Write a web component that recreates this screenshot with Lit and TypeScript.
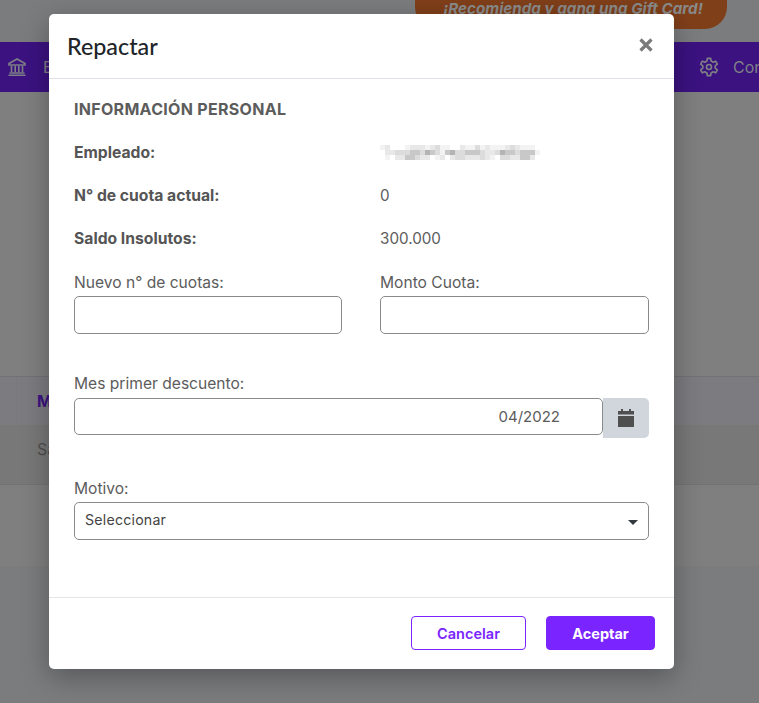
import { LitElement, html, css } from "lit";
import { customElement } from "lit/decorators.js";

const MOSAIC = [
  "12000122212311002113121112321110",
  "02233344354314533444322354434441",
  "01022443220120233222321033224420",
].join("");

function gearPath(): string {
  const pts: string[] = [];
  for (let k = 0; k < 6; k++) {
    const a = (30 + k * 60) * (Math.PI / 180);
    for (const [off, r] of [[-19, 7.6], [-11, 10.6], [11, 10.6], [19, 7.6]]) {
      const t = a + (off * Math.PI) / 180;
      pts.push(`${(12 + r * Math.cos(t)).toFixed(2)} ${(12 - r * Math.sin(t)).toFixed(2)}`);
    }
  }
  return "M" + pts.join("L") + "Z";
}

@customElement("app-root")
export class AppRoot extends LitElement {
  static styles = css`
    :host { display: block; position: relative; width: 759px; height: 703px; overflow: hidden; background: #7b7c7e; font-family: Inter, "Liberation Sans", sans-serif; color: #5c5c5c; }
    .page { display: flex; flex-direction: column; height: 100%; }
    .top { height: 42px; background: #7b7c7e; flex: none; display: flex; justify-content: flex-end; padding-right: 32px; }
    .promo { width: 312px; height: 29px; box-sizing: border-box; padding-left: 4px; border-radius: 0 0 22px 22px; background: #7f3f19; color: #8a8a8a; font-weight: 700; font-style: italic; font-size: 15.2px; text-align: center; line-height: 18px; }
    .nav { height: 50px; flex: none; background: #3b1280; color: #7f7f86; display: flex; justify-content: space-between; align-items: center; padding: 0 0 0 7px; font-size: 16px; }
    .nav span { display: flex; align-items: center; gap: 16px; }
    .nav svg { width: 20px; height: 20px; flex: none; }
    .nav em { font-style: normal; }
    .nav .right { width: 60px; gap: 14px; overflow: hidden; white-space: nowrap; }
    .content { height: 474px; flex: none; background: #7f7f7f; display: flex; flex-direction: column; padding-top: 284px; box-sizing: border-box; }
    .cell { background-image: linear-gradient(#797979, #797979); background-size: 1px 100%; background-position: 16px 0; background-repeat: no-repeat; padding-left: 37px; box-sizing: border-box; font-size: 16px; }
    .thead { height: 49px; flex: none; border-top: 1px solid #727272; background-color: #7c7b7f; color: #3b1280; font-weight: 700; padding-top: 14px; }
    .trow { height: 60px; flex: none; background-color: #787878; border-bottom: 1px solid #727272; padding-top: 14px; color: #4f4f4f; }
    .modal { position: absolute; left: 49px; top: 14px; width: 625px; height: 655px; background: #fff; border-radius: 5px; box-shadow: 0 8px 28px rgba(0,0,0,.3); display: flex; flex-direction: column; box-sizing: border-box; }
    .head { height: 65px; flex: none; border-bottom: 1px solid #dee2e6; display: flex; align-items: center; justify-content: space-between; padding: 0 21px 0 18px; box-sizing: border-box; }
    .head h2 { margin: 0; font: 500 23.3px Lato, sans-serif; color: #212529; }
    .close { width: 14px; height: 14px; display: block; margin-top: -3px; }
    .body { flex: 1; padding: 22px 25px 0; min-height: 0; }
    h3 { margin: 0 0 26px; font-size: 16px; line-height: 17px; font-weight: 700; color: #5c5c5c; letter-spacing: .3px; }
    .info { display: grid; grid-template-columns: 306px 1fr; row-gap: 26px; font-size: 15.2px; line-height: 17px; }
    .info b { font-weight: 700; font-size: 15.7px; color: #555; }
    .mosaic { display: grid; grid-template-columns: repeat(32, 5px); grid-auto-rows: 5px; width: 160px; margin-top: 1px; }
    .mosaic i { display: block; }
    label { display: block; font-size: 15.6px; line-height: 18px; color: #5c5c5c; }
    .two { display: grid; grid-template-columns: 268px 269px; column-gap: 38px; margin-top: 27px; }
    .box { height: 38px; border: 1px solid #8a8a8a; border-radius: 5px; box-sizing: border-box; margin-top: 4px; background: #fff; }
    .dategroup { display: flex; align-items: flex-start; margin-top: 5px; width: 575px; }
    .date { flex: 1; height: 37px; margin: 0; display: flex; align-items: center; justify-content: flex-end; padding-right: 42px; font-size: 15px; color: #5c5c5c; }
    .cal { width: 46px; height: 40px; background: #d1d5dc; border-radius: 0 5px 5px 0; display: flex; align-items: center; justify-content: center; }
    .cal svg { width: 16px; height: 18px; display: block; }
    .field-date { margin-top: 41px; }
    .field-sel { margin-top: 42px; width: 575px; }
    .select { margin-top: 4px; height: 38px; display: flex; align-items: center; justify-content: space-between; padding: 0 10px; font-size: 14.2px; color: #444; letter-spacing: .2px; }
    .select span { margin-bottom: 4px; }
    .caret { width: 0; height: 0; border-left: 5px solid transparent; border-right: 5px solid transparent; border-top: 5px solid #343a40; margin-top: 3px; }
    .foot { height: 72px; flex: none; border-top: 1px solid #e5e5e5; display: flex; justify-content: flex-end; align-items: flex-start; gap: 20px; padding: 18px 19px 0 0; box-sizing: border-box; }
    button { font: 700 14.5px Inter, sans-serif; height: 34px; border-radius: 4px; box-sizing: border-box; border: 1px solid #7a24ff; padding: 0; }
    .ghost { width: 115px; background: #fff; color: #7a24ff; font-weight: 600; }
    .solid { width: 109px; background: #7a24ff; color: #fff; }
  `;

  render() {
    const shades = ["#ffffff", "#f3f3f3", "#e8e8e8", "#dcdcdc", "#c8c8c8", "#b4b4b4"];
    return html`
      <div class="page">
        <div class="top"><div class="promo">¡Recomienda y gana una Gift Card!</div></div>
        <div class="nav">
          <span>
            <svg viewBox="0 0 20 20" fill="none" stroke="currentColor" stroke-width="1.6"><path d="M10 2 2 6.5v1.5h16V6.5z"/><path d="M4.5 9v6M8.2 9v6M11.8 9v6M15.5 9v6M2.5 16h15M1.5 18.2h17"/></svg>
            <em>B</em>
          </span>
          <span class="right">
            <svg viewBox="0 0 24 24" fill="none" stroke="currentColor" stroke-width="2" stroke-linejoin="round"><path d="${gearPath()}"/><circle cx="12" cy="12" r="3"/></svg>
            <em>Con</em>
          </span>
        </div>
        <div class="content">
          <div class="thead cell">M</div>
          <div class="trow cell">Sa</div>
        </div>
      </div>
      <div class="modal">
        <div class="head">
          <h2>Repactar</h2>
          <svg class="close" viewBox="0 0 14 14" stroke="#7b7b7b" stroke-width="3.2"><path d="M1.5 1.5l11 11M12.5 1.5l-11 11"/></svg>
        </div>
        <div class="body">
          <h3>INFORMACIÓN PERSONAL</h3>
          <div class="info">
            <b>Empleado:</b>
            <div class="mosaic">${[...MOSAIC].map((c) => html`<i style="background:${shades[+c]}"></i>`)}</div>
            <b>N° de cuota actual:</b><div>0</div>
            <b>Saldo Insolutos:</b><div>300.000</div>
          </div>
          <div class="two">
            <div><label>Nuevo n° de cuotas:</label><div class="box"></div></div>
            <div><label>Monto Cuota:</label><div class="box"></div></div>
          </div>
          <div class="field-date">
            <label>Mes primer descuento:</label>
            <div class="dategroup">
              <div class="box date">04/2022</div>
              <div class="cal"><svg viewBox="0 0 16 18"><path fill="#4f4f4f" d="M3 0h2v2h6V0h2v2h3v3.5H0V2h3zM0 7h16v11H0z"/></svg></div>
            </div>
          </div>
          <div class="field-sel">
            <label>Motivo:</label>
            <div class="box select"><span>Seleccionar</span><i class="caret"></i></div>
          </div>
        </div>
        <div class="foot">
          <button class="ghost">Cancelar</button>
          <button class="solid">Aceptar</button>
        </div>
      </div>
    `;
  }
}
